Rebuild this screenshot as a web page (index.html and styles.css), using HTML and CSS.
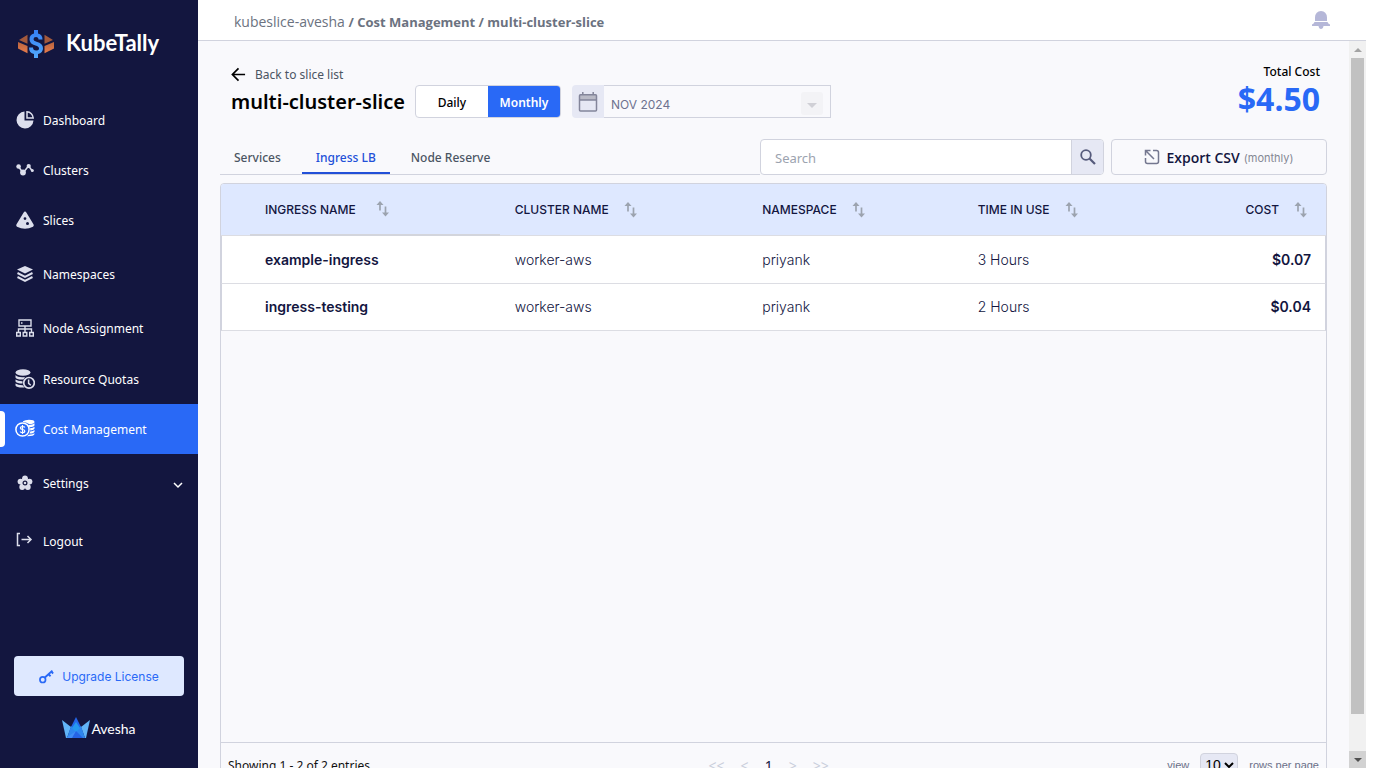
FILE: index.html
```html
<!DOCTYPE html>
<html lang="en">
<head>
<meta charset="utf-8">
<title>KubeTally - Cost Management</title>
<link rel="stylesheet" href="styles.css">
</head>
<body>
<svg class="defs" aria-hidden="true">
  <symbol id="sort" viewBox="0 0 14 18">
    <path d="M4 10.500V2M9.500 6.500V15" fill="none" stroke="currentColor" stroke-width="1.700"/>
    <path d="M.5 5L4 1L7.500 5ZM6 12.500L9.500 16.500L13 12.500Z" fill="currentColor"/>
  </symbol>
</svg>
<div class="app">
  <aside class="sidebar">
    <div class="brand">
      <svg class="brand-mark" viewBox="0 0 36 28">
        <defs>
          <linearGradient id="copper" x1="0" y1="0" x2="0" y2="1"><stop offset="0" stop-color="#b9643f"/><stop offset="1" stop-color="#e87c4c"/></linearGradient>
          <linearGradient id="dollar" x1="0" y1="0" x2="0" y2="1"><stop offset="0" stop-color="#3580f5"/><stop offset="1" stop-color="#52a8fb"/></linearGradient>
        </defs>
        <path d="M1 10L9.500 4.700V13.700ZM35 10L26.500 4.700V13.700Z" fill="#a3593c"/>
        <path d="M0 12L9.500 16V23.300L0 18.500ZM36 12L26.500 16V23.300L36 18.500Z" fill="url(#copper)"/>
        <path d="M16 0H20V3.500Q24.500 4.500 24.500 9.500H20.500Q20.500 7 18 7Q15.500 7 15.500 9.200Q15.500 11 18.500 11.800Q25 13.500 25 18.300Q25 23 20 24V28H16V24Q11 23 11 17.500H15Q15 20.500 18 20.500Q21 20.500 21 18.500Q21 16.500 17.500 15.500Q11.500 14 11.500 9.200Q11.500 4.500 16 3.500Z" fill="url(#dollar)"/>
      </svg>
      <span class="brand-name">KubeTally</span>
    </div>
    <nav class="nav">
      <a class="nav-item" href="#">
        <svg class="nav-icon" viewBox="0 0 20 20"><path d="M9.500 1.500A8.500 8.500 0 1 0 18.500 10.500H9.500Z" fill="currentColor"/><path d="M12 1.800V8H18.200A6.500 6.500 0 0 0 12 1.800Z" fill="none" stroke="currentColor" stroke-width="1.500"/></svg>
        Dashboard</a>
      <a class="nav-item" href="#">
        <svg class="nav-icon" viewBox="0 0 20 20"><path d="M3.500 6.500L8 13L13.500 6L17 10.500" fill="none" stroke="currentColor" stroke-width="1.500"/><g fill="currentColor"><circle cx="3.600" cy="6.500" r="2.300"/><circle cx="8" cy="12.500" r="2.900"/><circle cx="13.700" cy="6" r="2.100"/><circle cx="17.300" cy="10.500" r="1.500"/></g></svg>
        Clusters</a>
      <a class="nav-item" href="#">
        <svg class="nav-icon" viewBox="0 0 20 20"><path fill="currentColor" fill-rule="evenodd" d="M10 1.500Q10.800 1.500 11.500 2.800L18.600 14.600Q19.200 16 18 16.800Q14 18.800 10 18.800Q6 18.800 2 16.800Q.8 16 1.400 14.600L8.500 2.800Q9.200 1.500 10 1.500ZM10 7.200A1.400 1.400 0 1 0 10 10A1.400 1.400 0 1 0 10 7.200ZM12.500 12A1.500 1.500 0 1 0 12.500 15A1.500 1.500 0 1 0 12.500 12Z"/></svg>
        Slices</a>
      <a class="nav-item nav-spaced" href="#">
        <svg class="nav-icon" viewBox="0 0 20 20"><path fill="currentColor" d="M10 2L18 5.500L10 9.500L2 5.500Z"/><path fill="none" stroke="currentColor" stroke-width="2" d="M2.500 9L10 12.800L17.500 9M2.500 13L10 16.800L17.500 13"/></svg>
        Namespaces</a>
      <a class="nav-item" href="#">
        <svg class="nav-icon" viewBox="0 0 20 20"><path fill="none" stroke="currentColor" stroke-width="1.400" d="M4 2H16V8H4ZM10 8V14M3.500 14V11H16.500V14M1.700 14.500H5.300V18H1.700ZM8.200 14.500H11.800V18H8.200ZM14.700 14.500H18.300V18H14.700Z"/><path stroke="currentColor" stroke-width="1.400" d="M6 5H7.500"/></svg>
        Node Assignment</a>
      <a class="nav-item nav-quotas" href="#">
        <svg class="nav-icon" viewBox="0 0 20 20"><g fill="currentColor"><ellipse cx="8" cy="3.500" rx="7.500" ry="3.300"/><path d="M.5 6Q3 8.800 10 8L8.500 10.500Q2 11 .5 8.500ZM.5 10.500Q3 12.300 7.500 12.200V14.500Q2 14.500 .5 12.500ZM.5 14.500Q3 16.300 7.800 16.200L9.500 18.500Q2 19 .5 16.500Z"/></g><circle cx="14" cy="13.800" r="5.300" fill="none" stroke="currentColor" stroke-width="1.700"/><path d="M13.600 10.500V14.300L15.800 16.200" fill="none" stroke="currentColor" stroke-width="1.500"/></svg>
        Resource Quotas</a>
      <a class="nav-item active" href="#" aria-current="page">
        <svg class="nav-icon" viewBox="0 0 20 20"><circle cx="7.500" cy="10.500" r="6.600" fill="none" stroke="currentColor" stroke-width="1.500"/><path d="M9.800 8.500Q9.500 7.500 7.500 7.500Q5.400 7.500 5.400 9Q5.400 10.300 7.500 10.500Q9.800 10.700 9.800 12Q9.800 13.600 7.500 13.600Q5.400 13.600 5.200 12.500M7.500 6V15" fill="none" stroke="currentColor" stroke-width="1.200"/><path fill="currentColor" d="M8 2.300Q10 .8 14 .8Q19.500 .8 19.500 3Q19.500 5 14 5Q11 3 8 3ZM13 6Q18 6 19.500 4.300V6Q19.500 8 14.500 8.200ZM15 9.300Q18.500 9 19.500 7.700V9.500Q19 11.200 15.300 11.400ZM15.200 12.500Q18.500 12.200 19.500 11V12.700Q18.500 14.500 14.500 14.600ZM13.700 15.700Q18 15.500 19.500 14.200V15Q19 17.300 12 17.200Z"/></svg>
        Cost Management</a>
      <a class="nav-item nav-settings" href="#">
        <svg class="nav-icon" viewBox="0 0 20 20"><g fill="currentColor"><circle cx="10" cy="5.300" r="2.900"/><circle cx="5.500" cy="8.600" r="2.900"/><circle cx="14.500" cy="8.600" r="2.900"/><circle cx="7.200" cy="14" r="2.900"/><circle cx="12.800" cy="14" r="2.900"/><circle cx="10" cy="10" r="4.500"/></g><circle cx="10" cy="10" r="1.900" fill="none" stroke="#13163f" stroke-width="1.200"/></svg>
        Settings
        <svg class="chevron" viewBox="0 0 12 12"><path d="M2 6L6 10L10 6" fill="none" stroke="currentColor" stroke-width="1.500"/></svg></a>
      <a class="nav-item" href="#">
        <svg class="nav-icon" viewBox="0 0 20 20"><path d="M5 2.500H2.500V14.500H5M6.500 8.500H16M12.500 5L16 8.500L12.500 12" fill="none" stroke="currentColor" stroke-width="1.500"/></svg>
        Logout</a>
    </nav>
    <div class="side-foot">
      <button class="upgrade" type="button">
        <svg class="key" viewBox="0 0 14 14"><circle cx="3.500" cy="10" r="2.600" fill="none" stroke="currentColor" stroke-width="1.600"/><path d="M5.500 8L12.500 1.500M9 5L10.800 6.800M11 2L13.200 4.200" fill="none" stroke="currentColor" stroke-width="1.800"/></svg>
        Upgrade License</button>
      <div class="vendor">
        <svg class="crown" viewBox="0 0 28 22">
          <path d="M0 3L9 10L5 21H4Z" fill="#62b5f8"/><path d="M28 3L19 10L23 21H24Z" fill="#62b5f8"/>
          <path d="M14 0L19 10L14 15L9 10Z" fill="#2465e8"/><path d="M9 9L14 14L19 9L23 21H5Z" fill="#2e86ee"/>
          <path d="M14 5L18 11L14 15L10 11Z" fill="#2599ef"/><path d="M14 14L21 21H7Z" fill="#2563e4"/><path d="M4 21L14 14L10 21Z" fill="#3f8df5"/>
        </svg>
        <span>Avesha</span>
      </div>
    </div>
  </aside>

  <div class="main">
    <header class="topbar">
      <div class="crumbs"><a href="#">kubeslice-avesha</a> <b>/ Cost Management / multi-cluster-slice</b></div>
      <svg class="bell" viewBox="0 0 18 18"><path d="M3 10V6.500Q3.500 0 9 0Q14.500 0 15 6.500V10ZM2.500 11H15.500Q16 12.500 18 13.500V15H11.500Q11 18 9 18Q7 18 6.500 15H0V13.500Q2 12.500 2.500 11Z" fill="#b5b7d8"/></svg>
    </header>
    <div class="viewport">
      <main class="content">
        <div class="heading">
          <div>
            <a class="back" href="#"><svg viewBox="0 0 16 16"><path d="M15 8H2M8 1.500L1.500 8L8 14.500" fill="none" stroke="#000" stroke-width="1.800"/></svg>Back to slice list</a>
            <div class="title-row">
              <h1>multi-cluster-slice</h1>
              <div class="toggle"><button type="button">Daily</button><button type="button" class="on">Monthly</button></div>
              <div class="month">
                <span class="month-icon"><svg viewBox="0 0 20 20"><path d="M1.500 3H18.500V8H1.500Z" fill="#b9bac6"/><path d="M2.500 2.700H17.500Q18.500 2.700 18.500 3.700V18Q18.500 19 17.500 19H2.500Q1.500 19 1.500 18V3.700Q1.500 2.700 2.500 2.700ZM1.500 8H18.500M4.800 0V3M15.200 0V3" fill="none" stroke="#83859a" stroke-width="1.500"/></svg></span>
                <select aria-label="Month"><option>NOV 2024</option></select>
                <span class="month-arrow" aria-hidden="true"></span>
              </div>
            </div>
          </div>
          <div class="total"><span>Total Cost</span><strong>$4.50</strong></div>
        </div>

        <div class="toolbar">
          <div class="tabs" role="tablist">
            <button role="tab" type="button">Services</button>
            <button role="tab" type="button" class="selected" aria-selected="true">Ingress LB</button>
            <button role="tab" type="button">Node Reserve</button>
          </div>
          <div class="search">
            <input type="text" placeholder="Search" aria-label="Search">
            <button type="button" aria-label="Run search"><svg viewBox="0 0 16 16"><circle cx="6" cy="6" r="4.800" fill="none" stroke="#565b7c" stroke-width="1.800"/><path d="M9.500 9.500L15 15" stroke="#565b7c" stroke-width="2.200"/></svg></button>
          </div>
          <button class="export" type="button">
            <svg viewBox="0 0 16 16"><path d="M9 1.500H12.500Q14.500 1.500 14.500 3.500V12.500Q14.500 14.500 12.500 14.500H3.500Q1.500 14.500 1.500 12.500V9M1.500 6.500V1.500H6.500M1.800 1.800L10 10" fill="none" stroke="#74778f" stroke-width="1.500"/></svg>
            Export CSV <small>(monthly)</small></button>
        </div>

        <section class="panel">
          <div class="panel-body">
            <table>
              <colgroup><col class="c-pad"><col class="c-name"><col class="c-cluster"><col class="c-ns"><col class="c-time"><col></colgroup>
              <thead><tr>
                <th></th>
                <th class="sorted"><span>INGRESS NAME<svg><use href="#sort"/></svg></span></th>
                <th><span>CLUSTER NAME<svg><use href="#sort"/></svg></span></th>
                <th><span>NAMESPACE<svg><use href="#sort"/></svg></span></th>
                <th><span>TIME IN USE<svg><use href="#sort"/></svg></span></th>
                <th class="cost"><span>COST<svg><use href="#sort"/></svg></span></th>
              </tr></thead>
              <tbody>
                <tr><td></td><td class="strong">example-ingress</td><td>worker-aws</td><td>priyank</td><td>3 Hours</td><td class="strong cost">$0.07</td></tr>
                <tr><td></td><td class="strong">ingress-testing</td><td>worker-aws</td><td>priyank</td><td>2 Hours</td><td class="strong cost">$0.04</td></tr>
              </tbody>
            </table>
          </div>
          <footer class="pager">
            <span class="count">Showing 1 - 2 of 2 entries</span>
            <div class="pages"><button type="button">&lt;&lt;</button><button type="button">&lt;</button><button type="button" class="current">1</button><button type="button">&gt;</button><button type="button">&gt;&gt;</button></div>
            <label class="size">view <select><option>10</option></select> rows per page</label>
          </footer>
        </section>
      </main>
      <div class="scrollbar" aria-hidden="true"><span class="up"></span><span class="thumb"></span><span class="down"></span></div>
    </div>
  </div>
</div>
</body>
</html>
```
FILE: styles.css
```css
* { box-sizing: border-box; }
:root {
  --navy: #13163f;
  --blue: #2969f6;
  --line: #d1d3de;
  --page: #f9f9fc;
  --ui: "Noto Sans", "Open Sans", sans-serif;
  --data: Inter, Roboto, sans-serif;
}
body { margin: 0; background: #fff; font-family: var(--ui); }
a { color: inherit; text-decoration: none; }
button, select, input { font: inherit; color: inherit; }
button { padding: 0; border: 0; background: none; }
.defs { display: none; }

.app { display: flex; height: 100vh; padding: 0 9px 14px 0; overflow: hidden; }

.sidebar { flex: 0 0 198px; display: flex; flex-direction: column; background: var(--navy); color: #fff; }
.brand { display: flex; align-items: center; gap: 12px; height: 95px; padding: 0 0 8px 18px; }
.brand-mark { width: 36px; height: 28px; }
.brand-name { padding-bottom: 2px; font: 700 22px/28px Lato, sans-serif; }
.nav-item { position: relative; display: flex; align-items: center; gap: 8px; height: 50px; padding: 0 14px 0 15px; font-size: 12px; }
.nav-icon { width: 20px; height: 20px; color: #dcdeec; }
.nav-spaced { margin: 4px 0; }
.nav-quotas { margin-top: 1px; }
.nav-settings { margin: 4px 0 8px; }
.active { background: var(--blue); }
.active .nav-icon { color: #fff; }
.active::before { content: ""; position: absolute; left: 0; top: 7px; bottom: 7px; width: 5px; background: #fff; border-radius: 0 4px 4px 0; }
.chevron { width: 12px; height: 12px; margin-left: auto; }
.side-foot { margin-top: auto; padding: 0 14px 28px; }
.upgrade { display: flex; align-items: center; justify-content: center; gap: 8px; width: 100%; height: 40px; border-radius: 4px; background: #dee8ff; color: var(--blue); font: 400 12px var(--data); }
.key { width: 15px; height: 15px; }
.vendor { display: flex; align-items: flex-end; justify-content: center; gap: 1px; margin-top: 21px; padding-bottom: 1px; font: 400 14px/20px Lato, sans-serif; }
.crown { width: 28px; height: 22px; }

.main { flex: 1; min-width: 0; display: flex; flex-direction: column; }
.topbar { flex: 0 0 41px; display: flex; align-items: center; justify-content: space-between; padding: 0 36px; border-bottom: 1px solid var(--line); }
.crumbs { padding-top: 4px; font-family: "Open Sans", sans-serif; font-size: 14px; line-height: 20px; color: #6b7280; }
.crumbs b { font-size: 13px; font-weight: 700; }
.bell { width: 18px; height: 18px; }
.viewport { flex: 1; min-height: 0; display: flex; background: var(--page); }
.content { flex: 1; min-width: 0; padding: 23px 22px 0; overflow: hidden; }

.heading { display: flex; justify-content: space-between; padding: 0 7px 0 11px; }
.back { display: flex; align-items: center; gap: 9px; height: 21px; font-size: 12px; color: #4b5563; }
.back svg { width: 15px; height: 15px; }
.title-row { display: flex; align-items: center; }
h1 { margin: 0 10px 0 0; font-size: 20px; line-height: 32px; font-weight: 600; color: #000; }
.toggle { display: flex; height: 33px; margin-right: 11px; border: 1px solid var(--line); border-radius: 4px; background: #fff; overflow: hidden; }
.toggle button { width: 72px; padding-top: 2px; font-size: 12px; font-weight: 500; color: #000; }
.toggle .on { background: var(--blue); color: #fff; font-weight: 600; }
.month { position: relative; display: flex; height: 33px; width: 259px; }
.month-icon { display: grid; place-items: center; width: 32px; background: #e6e8f4; border-radius: 4px 0 0 4px; }
.month-icon svg { width: 20px; height: 20px; }
.month select { flex: 1; appearance: none; padding: 5px 7px 0; border: 1px solid var(--line); border-left: 0; border-radius: 0; background: transparent; color: #6e7390; font-family: var(--data); font-size: 12px; }
.month-arrow { position: absolute; right: 8px; top: 7px; width: 22px; height: 23px; border-radius: 3px; background: #f3f3f6; pointer-events: none; }
.month-arrow::after { content: ""; position: absolute; left: 6px; top: 11px; border: 5px solid transparent; border-top-color: #d0d0d6; border-bottom: 0; }
.total { display: flex; flex-direction: column; align-items: flex-end; color: #000; }
.total span { font-size: 12px; line-height: 16px; font-weight: 500; }
.total strong { font-size: 32px; line-height: 38px; font-weight: 700; color: var(--blue); }

.toolbar { display: flex; margin-top: 21px; height: 36px; }
.tabs { flex: 1; display: flex; align-items: flex-end; border-bottom: 1px solid var(--line); }
.tabs button { height: 33px; margin-right: 7px; padding: 2px 14px 0; border-bottom: 2px solid transparent; font-size: 12px; font-weight: 500; color: #4b5563; }
.tabs .selected { color: #2250d8; border-color: #2250d8; }
.search { display: flex; flex: 0 0 344px; margin-right: 7px; border: 1px solid var(--line); border-radius: 4px; background: #fff; overflow: hidden; }
.search input { flex: 1; min-width: 0; padding: 2px 14px 0; border: 0; background: transparent; font-size: 13px; }
.search input::placeholder { color: #9ca3af; }
.search button { display: grid; place-items: center; width: 32px; border-left: 1px solid var(--line); background: #e6e8f4; }
.search svg { width: 16px; height: 16px; }
.export { display: flex; align-items: center; justify-content: center; gap: 4px; flex: 0 0 216px; border: 1px solid var(--line); border-radius: 4px; color: var(--navy); font: 600 14px "Open Sans", sans-serif; }
.export svg { width: 16px; height: 16px; margin-right: 2px; }
.export small { padding-top: 2px; font: 400 11px var(--data); color: #858894; }

.panel { margin-top: 8px; border: 1px solid var(--line); border-radius: 4px; overflow: hidden; }
.panel-body { height: calc(100vh - 224px); }
table { width: 100%; table-layout: fixed; border-collapse: separate; border-spacing: 0; color: var(--navy); font-family: var(--data); }
.c-pad { width: 29px; }
.c-name { width: 22.6%; }
.c-cluster { width: 22.4%; }
.c-ns { width: 19.5%; }
.c-time { width: 16%; }
th { height: 52px; padding: 0 15px; background: #dee8ff; border-bottom: 1px solid #dcdde3; font-size: 12px; font-weight: 500; text-align: left; }
th.sorted { border-bottom: 2px solid #d3d5dc; }
th span { display: inline-flex; align-items: center; gap: 15px; vertical-align: middle; }
th.sorted span { gap: 20px; }
th svg { width: 14px; height: 18px; color: #9ca3af; }
th.cost { padding-right: 18px; }
td { height: 48px; padding: 0 15px 1px; background: #fff; border-bottom: 1px solid #dcdde3; font-size: 14px; font-weight: 300; }
td:first-child { border-left: 1px solid var(--line); }
td:last-child { padding-right: 14px; border-right: 1px solid var(--line); }
tr:last-child td { height: 47px; }
td.strong { font-weight: 600; }
.cost { text-align: right; }

.pager { display: flex; justify-content: space-between; align-items: center; height: 45px; padding: 0 7px; border-top: 1px solid var(--line); font-size: 12px; color: #111; }
.pages { display: flex; gap: 16px; color: #c9cedb; font-size: 14px; }
.pages .current { color: var(--navy); }
.size { display: flex; align-items: center; gap: 11px; font-family: "Liberation Sans", sans-serif; font-size: 11px; color: #6b7088; }
.size select { height: 24px; width: 38px; border: 1px solid var(--line); border-radius: 4px; background: #e6e8f4; color: #000; font: 14px "Liberation Sans", sans-serif; }

.scrollbar { flex: 0 0 17px; display: flex; flex-direction: column; align-items: center; background: #f1f1f1; }
.scrollbar .up, .scrollbar .down { display: grid; place-items: center; width: 100%; height: 17px; }
.up::after, .down::after { content: ""; border: 4px solid transparent; }
.up::after { border-top: 0; border-bottom-color: #a3a3a3; }
.down::after { border-bottom: 0; border-top-color: #505050; }
.scrollbar .down { background: #d2d2d2; margin-top: auto; }
.thumb { width: 13px; flex: 0 1 656px; background: #c1c1c1; }
```
